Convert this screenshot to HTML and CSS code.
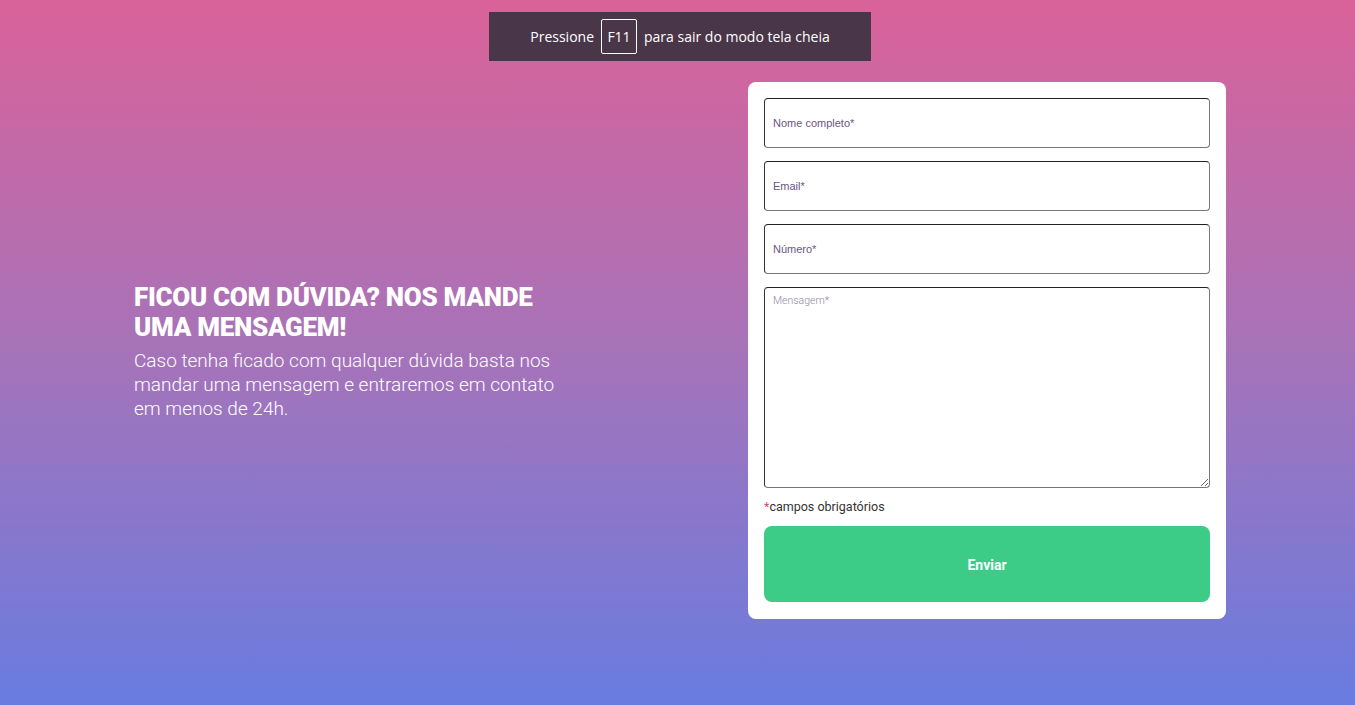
FILE: index.html
```html
<!DOCTYPE html>
<html lang="pt-BR">
<head>
<meta charset="utf-8">
<title>Contato</title>
<link rel="stylesheet" href="styles.css">
</head>
<body>
<div class="fs-notice">Pressione <span class="key">F11</span> para sair do modo tela cheia</div>
<main class="page">
  <section class="intro">
    <h1 class="intro-title">Ficou com dúvida? Nos mande uma mensagem!</h1>
    <p class="intro-text">Caso tenha ficado com qualquer dúvida basta nos mandar uma mensagem e entraremos em contato em menos de 24h.</p>
  </section>
  <form class="card">
    <input class="field" type="text" placeholder="Nome completo*">
    <input class="field" type="email" placeholder="Email*">
    <input class="field" type="text" placeholder="Número*">
    <textarea class="field area" placeholder="Mensagem*"></textarea>
    <p class="note"><span class="star">*</span>campos obrigatórios</p>
    <button class="submit" type="button">Enviar</button>
  </form>
</main>
</body>
</html>
```
FILE: styles.css
```css
html, body {
  margin: 0;
  padding: 0;
}
body {
  min-height: 705px;
  background: linear-gradient(180deg, #da6299 0%, #a673b9 50%, #687ce0 100%);
  font-family: Roboto, "Noto Sans", sans-serif;
}
.fs-notice {
  position: absolute;
  top: 12px;
  left: 489px;
  width: 382px;
  height: 49px;
  background: #4a3649;
  color: #fff;
  font-family: "Open Sans", "Noto Sans", sans-serif;
  font-size: 14px;
  display: flex;
  align-items: center;
  justify-content: center;
  gap: 7px;
  box-sizing: border-box;
}
.key {
  display: inline-flex;
  align-items: center;
  justify-content: center;
  width: 36px;
  height: 35px;
  border: 1px solid #fff;
  border-radius: 2px;
  box-sizing: border-box;
}
.page {
  height: 705px;
  display: flex;
  align-items: center;
  justify-content: space-between;
  padding: 0 129px 0 134px;
  box-sizing: border-box;
}
.intro {
  width: 440px;
  color: #fff;
  margin-top: -3px;
}
.intro-title {
  margin: 0;
  font-size: 26px;
  line-height: 30px;
  font-weight: 900;
  text-transform: uppercase;
  letter-spacing: -0.3px;
}
.intro-text {
  margin: 7px 0 0;
  font-size: 19px;
  line-height: 24px;
  font-weight: 300;
}
.card {
  width: 478px;
  background: #fff;
  border-radius: 8px;
  padding: 16px 16px 17px;
  box-sizing: border-box;
  display: flex;
  flex-direction: column;
  gap: 13px;
  margin-top: -4px;
}
.field {
  width: 100%;
  height: 50px;
  box-sizing: border-box;
  border: 1px solid #555;
  border-color: #222 #777 #777 #333;
  border-radius: 4px;
  padding: 0 8px;
  font-family: "Liberation Sans", Arial, sans-serif;
  font-size: 11px;
  background: #fff;
}
.field::placeholder {
  color: #6a5680;
}
.area {
  height: 201px;
  padding: 6px 8px;
  font-family: Roboto, sans-serif;
  font-weight: 300;
  font-size: 10.5px;
  resize: vertical;
}
.area::placeholder {
  color: #9486a4;
}
.note {
  margin: 0;
  font-size: 12.5px;
  color: #333;
  line-height: 15px;
  margin-top: -2px;
  margin-bottom: -1px;
}
.star {
  color: #c24f7a;
}
.submit {
  height: 76px;
  width: 100%;
  border: none;
  border-radius: 8px;
  background: #3ccc88;
  color: #fff;
  font-family: Roboto, sans-serif;
  font-weight: 700;
  font-size: 14px;
  padding-top: 2px;
}
```
